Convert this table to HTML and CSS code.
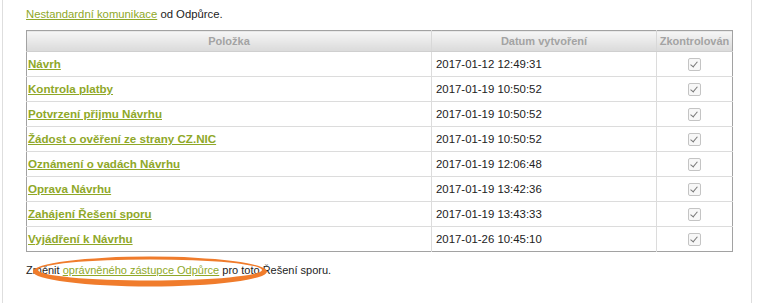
FILE: index.html
```html
<!DOCTYPE html>
<html>
<head>
<meta charset="utf-8">
<link rel="stylesheet" href="styles.css">
</head>
<body>
<div class="page">
  <div class="content">
    <p class="intro"><a href="#">Nestandardní komunikace</a> od Odpůrce.</p>
    <table class="grid">
      <thead>
        <tr><th class="c-item">Položka</th><th class="c-date">Datum vytvoření</th><th class="c-check">Zkontrolován</th></tr>
      </thead>
      <tbody>
        <tr><td><a href="#">Návrh</a></td><td>2017-01-12 12:49:31</td><td class="chk"><span class="box"></span></td></tr>
        <tr><td><a href="#">Kontrola platby</a></td><td>2017-01-19 10:50:52</td><td class="chk"><span class="box"></span></td></tr>
        <tr><td><a href="#">Potvrzení přijmu Návrhu</a></td><td>2017-01-19 10:50:52</td><td class="chk"><span class="box"></span></td></tr>
        <tr><td><a href="#">Žádost o ověření ze strany CZ.NIC</a></td><td>2017-01-19 10:50:52</td><td class="chk"><span class="box"></span></td></tr>
        <tr><td><a href="#">Oznámení o vadách Návrhu</a></td><td>2017-01-19 12:06:48</td><td class="chk"><span class="box"></span></td></tr>
        <tr><td><a href="#">Oprava Návrhu</a></td><td>2017-01-19 13:42:36</td><td class="chk"><span class="box"></span></td></tr>
        <tr><td><a href="#">Zahájení Řešení sporu</a></td><td>2017-01-19 13:43:33</td><td class="chk"><span class="box"></span></td></tr>
        <tr><td><a href="#">Vyjádření k Návrhu</a></td><td>2017-01-26 10:45:10</td><td class="chk"><span class="box"></span></td></tr>
      </tbody>
    </table>
    <p class="outro">Změnit <a href="#">oprávněného zástupce Odpůrce</a> pro toto Řešení sporu.</p>
  </div>
  <svg class="mark" width="240" height="34" viewBox="0 0 240 34">
    <path fill="#f07c2c" fill-rule="evenodd" d="M3 17.5 A117 15 0 1 0 237 17.5 A117 15 0 1 0 3 17.5 Z M8 16 A112 10.5 0 1 0 232 16 A112 10.5 0 1 0 8 16 Z"/>
  </svg>
</div>
</body>
</html>
```

FILE: styles.css
```css
html, body {
  margin: 0;
  padding: 0;
  background: #fff;
}
body {
  font-family: "Liberation Sans", Arial, sans-serif;
  font-size: 11.3px;
  color: #222;
}
.page {
  position: relative;
  margin-left: 2px;
  width: 750px;
  height: 303px;
  border-left: 1px solid #dedede;
  border-right: 1px solid #dedede;
  box-sizing: border-box;
}
.content {
  padding: 7px 0 0 23px;
}
a {
  color: #8fa828;
  text-decoration: underline;
}
.intro {
  margin: 0 0 8px 0;
  line-height: 15px;
}
.grid {
  width: 707px;
  border-collapse: collapse;
  border: 1px solid #a2a2a2;
}
.grid th {
  height: 20px;
  padding: 0 2px;
  font-size: 11px;
  font-weight: bold;
  color: #a3a3a3;
  background: linear-gradient(#f6f6f6, #dadada);
  border-left: 1px solid #d8d8d8;
  border-bottom: 1px solid #cfcfcf;
  text-align: center;
}
.grid th.c-item { width: 400px; border-left: none; }
.grid th.c-date { width: 220px; }
.grid th.c-check { padding: 0 1px; }
.grid td {
  height: 24px;
  padding: 0 4px;
  border-left: 1px solid #dcdcdc;
  border-top: 1px solid #dcdcdc;
  vertical-align: middle;
  font-size: 11.4px;
  line-height: 14px;
}
.grid td:first-child {
  border-left: none;
  padding-left: 1px;
}
.grid td a {
  font-weight: bold;
  font-size: 11.6px;
}
.grid td.chk {
  text-align: center;
}
.box {
  display: inline-block;
  width: 11px;
  height: 11px;
  border: 1px solid #c4c4c4;
  border-radius: 2px;
  background: #f7f7f7;
  position: relative;
  vertical-align: middle;
}
.box::after {
  content: "";
  position: absolute;
  left: 3px;
  top: 1px;
  width: 3px;
  height: 6px;
  border-right: 1.5px solid #777;
  border-bottom: 1.5px solid #777;
  transform: rotate(40deg);
}
.outro {
  margin: 11px 0 0 0;
  line-height: 15px;
  font-size: 11px;
}
.mark {
  position: absolute;
  left: 27px;
  top: 254px;
}
```
